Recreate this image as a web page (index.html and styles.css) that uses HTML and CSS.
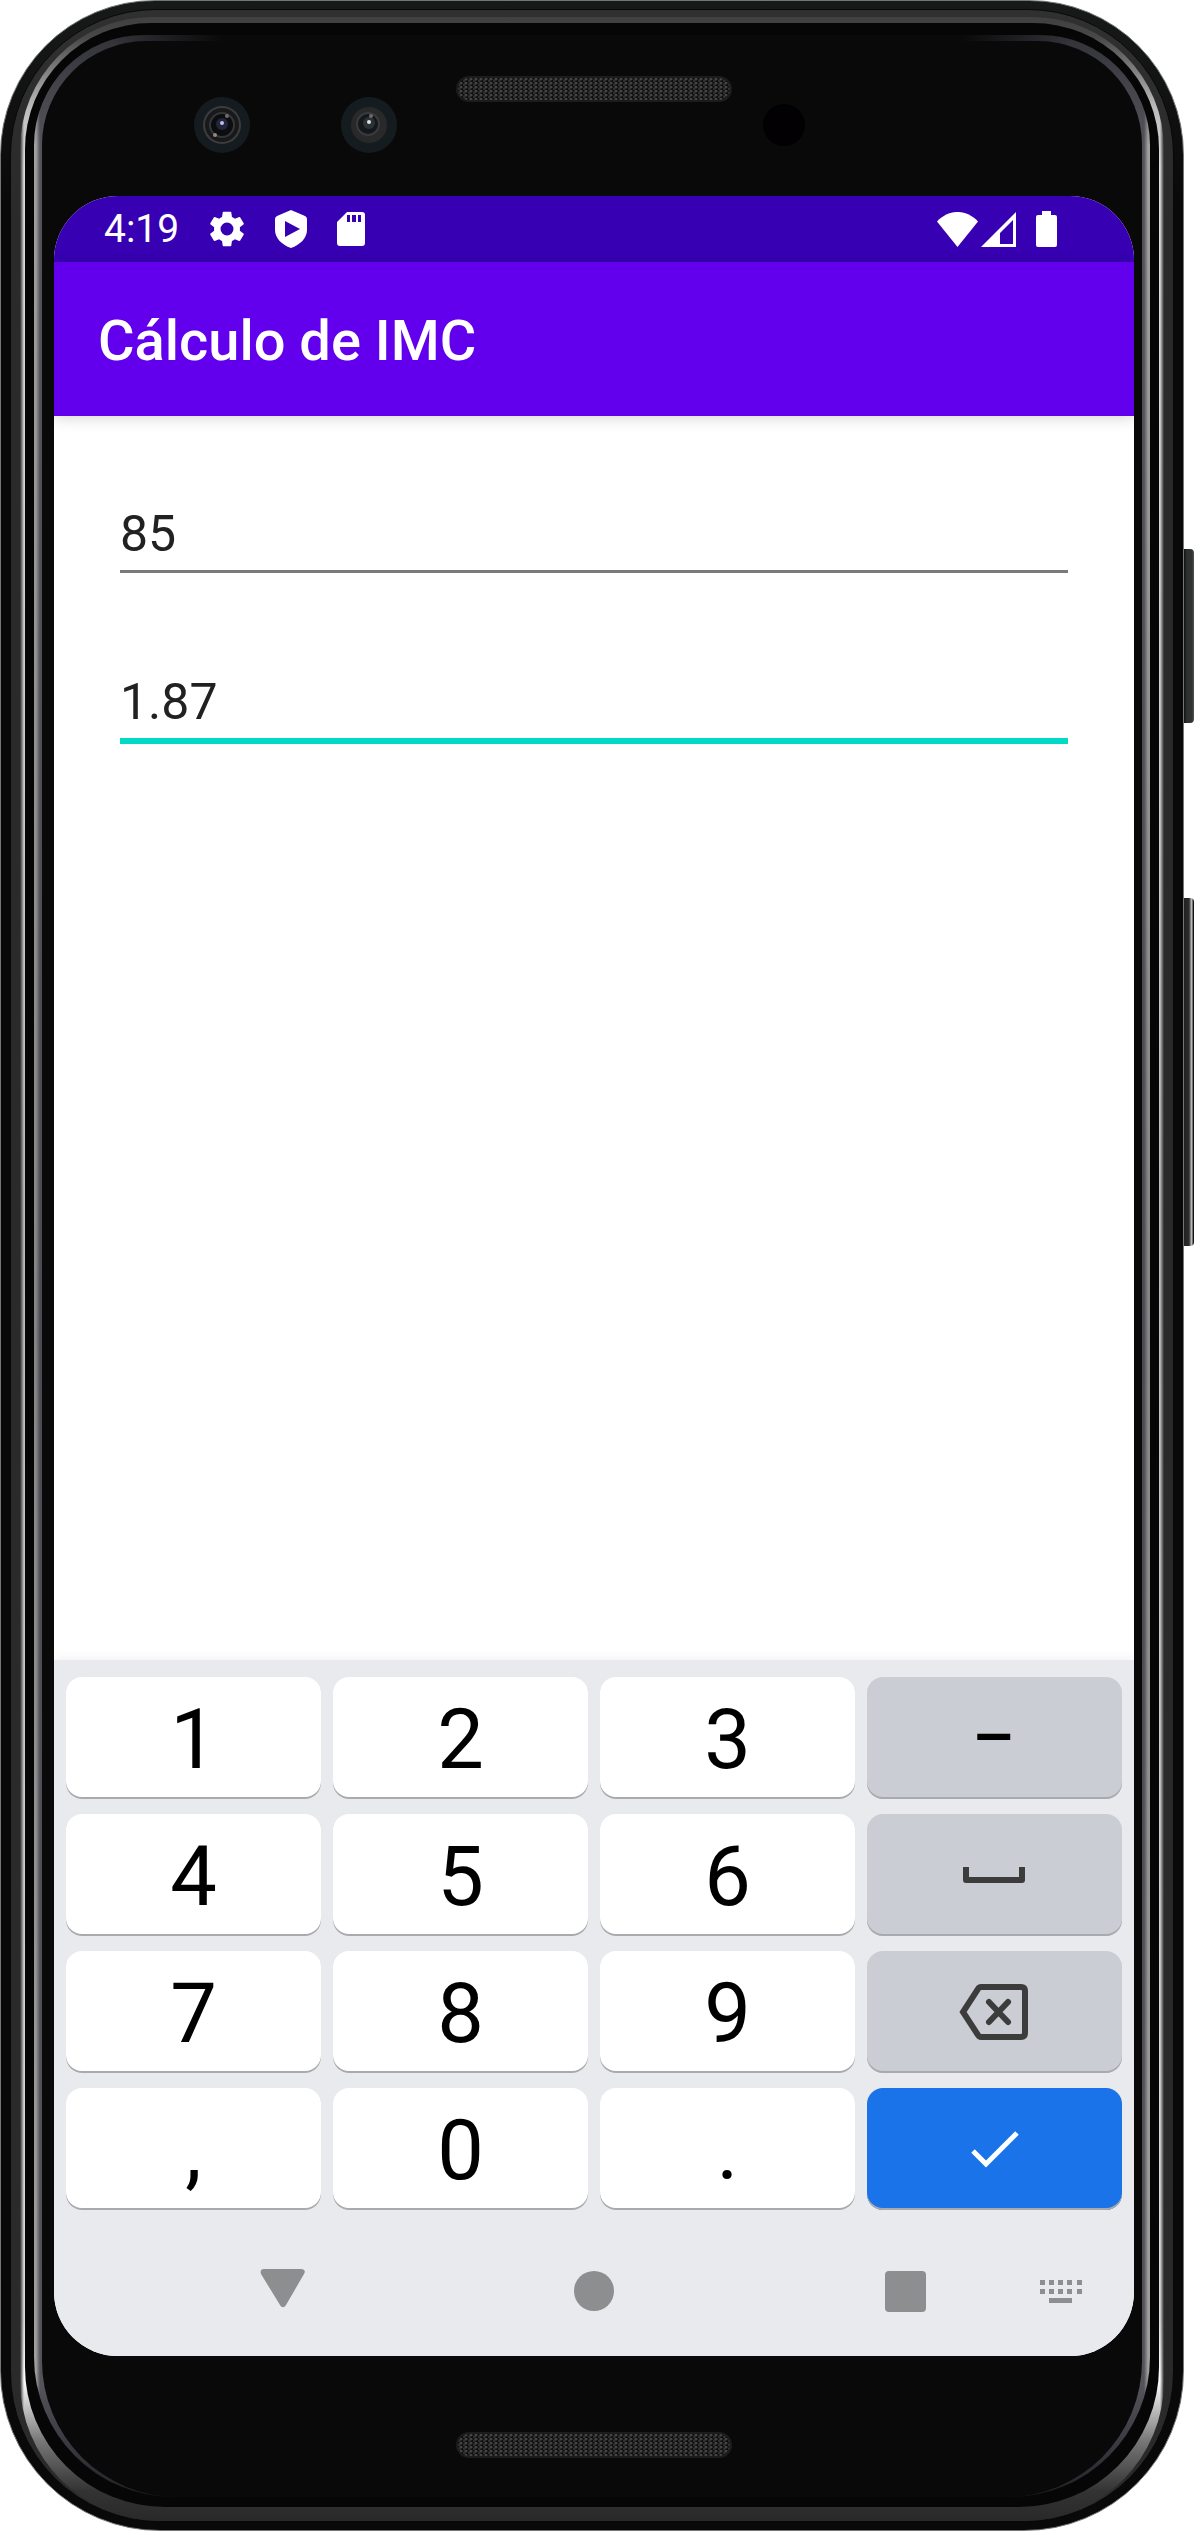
FILE: index.html
```html
<!DOCTYPE html>
<html lang="pt-BR">
<head>
<meta charset="utf-8">
<meta name="viewport" content="width=device-width, initial-scale=1">
<title>Cálculo de IMC</title>
<link rel="stylesheet" href="styles.css">
</head>
<body>
<div class="device">
  <div class="shell"><div class="band"><div class="highlight"><div class="glass"><div class="rim"><div class="face">
    <div class="sensors" aria-hidden="true">
      <div class="cameras">
        <svg class="camera" viewBox="0 0 56 56"><circle cx="28" cy="28" r="28" fill="#151c20"/><circle cx="28" cy="28" r="19" fill="#3c3c3d"/><circle cx="28" cy="28" r="17" fill="#17191a"/><circle cx="28" cy="28" r="12" fill="#0c0d0e" stroke="#34373a" stroke-width="2"/><circle cx="28" cy="27" r="6" fill="#24243a"/><circle cx="28" cy="26" r="2" fill="#b9c4ee"/><circle cx="21" cy="38" r="2" fill="#9a8580"/><circle cx="33" cy="19" r="2" fill="#77696a"/></svg>
        <svg class="camera" viewBox="0 0 56 56"><circle cx="28" cy="28" r="28" fill="#151c20"/><circle cx="28" cy="28" r="18" fill="#29292a"/><circle cx="27" cy="27" r="11" fill="#15181b" stroke="#383b3e" stroke-width="2"/><circle cx="28" cy="26" r="6" fill="#2b3135"/><circle cx="28" cy="25" r="2" fill="#d9e2ea"/><circle cx="30" cy="19" r="2" fill="#70686e"/></svg>
      </div>
      <div class="speaker"></div>
      <div class="proximity"></div>
    </div>
    <div class="screen">
      <div class="status">
        <div class="status-left">
          <span class="time">4:19</span>
          <svg width="36" height="36" viewBox="2 2 20 20" fill="#fff"><path d="M19.14 12.94c.04-.3.06-.61.06-.94 0-.32-.02-.64-.07-.94l2.03-1.58a.49.49 0 0 0 .12-.61l-1.92-3.32a.49.49 0 0 0-.59-.22l-2.39.96c-.5-.38-1.03-.7-1.62-.94L14.4 2.81A.48.48 0 0 0 13.92 2.4h-3.84c-.24 0-.43.17-.47.41l-.36 2.54c-.59.24-1.13.57-1.62.94l-2.39-.96a.48.48 0 0 0-.59.22L2.74 8.87c-.12.21-.08.47.12.61l2.03 1.58c-.05.3-.09.63-.09.94s.02.64.07.94l-2.03 1.58a.49.49 0 0 0-.12.61l1.92 3.32c.12.22.37.29.59.22l2.39-.96c.5.38 1.03.7 1.62.94l.36 2.54c.05.24.24.41.48.41h3.84c.24 0 .44-.17.47-.41l.36-2.54c.59-.24 1.13-.56 1.62-.94l2.39.96c.22.08.47 0 .59-.22l1.92-3.32a.49.49 0 0 0-.12-.61zM12 15.6A3.6 3.6 0 1 1 12 8.400a3.6 3.6 0 0 1 0 7.2z"/></svg>
          <svg width="32" height="38" viewBox="0 0 32 38" fill="#fff"><path fill-rule="evenodd" d="M16 0 30 6q2 1 2 3v11c0 8-7 15-16 18C7 35 0 28 0 20V9q0-2 2-3zM10 11v16l15-8z"/></svg>
          <svg width="28" height="34" viewBox="0 0 28 34" fill="#fff"><path fill-rule="evenodd" d="M10 0h15q3 0 3 3v28q0 3-3 3H3q-3 0-3-3V10zM10 3v7h3V3zm5 0v7h4V3zm6 0v7h3V3z"/></svg>
        </div>
        <div class="status-right">
          <svg width="41" height="35" viewBox="0 0 41 35" fill="#fff"><path d="M0 9.500C12-3.200 29-3.200 41 9.500L20.500 35z"/></svg>
          <svg width="35" height="35" viewBox="0 0 35 35" fill="#fff"><path fill-rule="evenodd" d="M35 0v35H0zM32 8 19 21v11h13z"/></svg>
          <svg class="battery" width="21" height="36" viewBox="0 0 21 36" fill="#fff"><path d="M6 0h9v4h4q2 0 2 2v28q0 2-2 2H2q-2 0-2-2V6q0-2 2-2h4z"/></svg>
        </div>
      </div>
      <header class="appbar"><h1>Cálculo de IMC</h1></header>
      <main class="form">
        <input class="field" type="text" inputmode="decimal" aria-label="Peso" value="85">
        <input class="field field-active" type="text" inputmode="decimal" aria-label="Altura" value="1.87">
      </main>
      <div class="keyboard">
        <button class="key">1</button><button class="key">2</button><button class="key">3</button>
        <button class="key key-alt key-dash">–</button>
        <button class="key">4</button><button class="key">5</button><button class="key">6</button>
        <button class="key key-alt" aria-label="Espaço"><svg width="62" height="16" viewBox="0 0 62 16" fill="none" stroke="#3c3c3d" stroke-width="6" stroke-linejoin="round"><path d="M3 0v13h56V0"/></svg></button>
        <button class="key">7</button><button class="key">8</button><button class="key">9</button>
        <button class="key key-alt" aria-label="Apagar"><svg width="70" height="56" viewBox="0 0 70 56" fill="none" stroke="#3c3c3d" stroke-width="6" stroke-linejoin="round" stroke-linecap="round"><path stroke-linejoin="miter" d="M22 3h40q4 0 4 4v42q0 4-4 4H22q-2 0-3-2L4 28 19 5q1-2 3-2z"/><path d="m30 18 19 20M49 18 30 38"/></svg></button>
        <button class="key">,</button><button class="key">0</button><button class="key">.</button>
        <button class="key key-done" aria-label="Concluir"><svg width="48" height="37" viewBox="0 0 48 37" fill="none" stroke="#fff" stroke-width="5"><path d="m2 20 13 13L46 2"/></svg></button>
      </div>
      <nav class="navbar">
        <div class="nav-main">
          <button aria-label="Voltar"><svg width="46" height="46" viewBox="0 0 46 46" fill="#8d8e90"><path d="M4 1h37c3 0 5 2 3 5L26 37c-2 3-4 3-6 0L1 6C0 3 1 1 4 1z"/></svg></button>
          <button aria-label="Início"><svg width="40" height="40" viewBox="0 0 40 40" fill="#8d8e90"><circle cx="20" cy="20" r="20"/></svg></button>
          <button aria-label="Recentes"><svg width="41" height="41" viewBox="0 0 41 41" fill="#8d8e90"><rect width="41" height="41" rx="4"/></svg></button>
        </div>
        <button class="nav-ime" aria-label="Teclado"><svg width="42" height="24" viewBox="0 0 42 24" fill="#8d8e90"><path d="M0 1h5v5H0zm9 0h5v5H9zm9 0h5v5h-5zm9 0h5v5h-5zm10 0h5v5h-5zM0 10h5v5H0zm9 0h5v5H9zm9 0h5v5h-5zm9 0h5v5h-5zm10 0h5v5h-5zM9 19h23v5H9z"/></svg></button>
      </nav>
    </div>
    <div class="chin" aria-hidden="true"><div class="speaker"></div></div>
  </div></div></div></div></div></div>
  <div class="side" aria-hidden="true">
    <div class="power"></div>
    <div class="volume"></div>
  </div>
</div>
</body>
</html>
```
FILE: styles.css
```css
* { box-sizing: border-box; }

body {
  margin: 0;
  background: #fff;
  font-family: Roboto, "Liberation Sans", sans-serif;
}

button {
  border: 0;
  padding: 0;
  background: none;
  font: inherit;
  display: flex;
  align-items: center;
  justify-content: center;
}

svg { display: block; flex: none; }

/* Phone body: each layer is one ring of the frame */
.device {
  display: flex;
  min-height: 100vh;
  padding-bottom: 1px;
}

.shell, .band, .highlight, .glass, .rim, .face, .screen {
  display: flex;
  flex-direction: column;
  flex: 1;
  min-width: 0;
}

.shell {
  border: 1px solid #737875;
  border-radius: 155px 155px 160px 160px;
  padding: 8px 9px;
  background: linear-gradient(#181a19, #090909 200px);
}

.band {
  border: 1px solid #080808;
  border-radius: 146px 146px 150px 150px;
  padding: 7px 9px 0;
  background: linear-gradient(#303030, #2a2a2a 200px, #2a2a2a);
}

.highlight {
  border-radius: 132px 132px 140px 140px;
  padding: 6px 5px 14px;
  background:
    linear-gradient(to right, #2a2a2a, transparent 4px, transparent calc(100% - 4px), #2a2a2a),
    linear-gradient(#404040, #484848 20px, #bbb 90px, #ddd 150px, #ccc 800px, #bbb 1200px, #ddd calc(100% - 200px), #fff calc(100% - 140px), #777 calc(100% - 80px), #333 calc(100% - 30px), #292929);
}

.glass {
  border-radius: 126px 126px 140px 140px;
  padding: 12px 9px 10px;
  background: #060606;
}

.rim {
  border-radius: 110px 110px 140px 140px;
  padding: 6px 8px 0;
  background:
    linear-gradient(to right, transparent 80px, #090909 190px, #090909 calc(100% - 190px), transparent calc(100% - 80px)),
    linear-gradient(to right, transparent 2px, rgba(50, 50, 58, .7) 6px, rgba(50, 50, 58, .7) calc(100% - 6px), transparent calc(100% - 2px)),
    linear-gradient(#303035, #77767b 60px, #a0a0a2 110px, #909092 800px, #858588 1300px, #a0a0a2 calc(100% - 110px), #090909 calc(100% - 10px));
}

.face {
  border-radius: 104px 104px 136px 136px;
  padding: 0 8px 0 12px;
  background: #090909;
}

.sensors {
  display: grid;
  grid-template-columns: 1fr auto 1fr;
  height: 155px;
  padding-top: 35px;
}

.cameras {
  display: flex;
  justify-content: flex-end;
  gap: 91px;
  padding: 21px 59px 0 0;
}

.camera { width: 56px; height: 56px; }

.speaker {
  width: 276px;
  height: 26px;
  border: 2px solid #1c1c1c;
  border-radius: 13px;
  background:
    radial-gradient(circle at 3px 1px, #444 1px, transparent 2px) 0 0 / 5px 4px,
    radial-gradient(circle at 1px 3px, #303030 1px, transparent 2px) 0 0 / 5px 4px,
    #0c0c0c;
}

.proximity {
  width: 42px;
  height: 42px;
  margin: 28px 0 0 31px;
  border-radius: 50%;
  background: #020003;
}

.chin {
  display: flex;
  justify-content: center;
  height: 141px;
  padding-top: 76px;
}

.side {
  width: 10px;
  padding-top: 549px;
}

.power, .volume {
  border-radius: 0 4px 4px 0;
}

.power {
  height: 174px;
  background: linear-gradient(to right, #111, #303232 3px, #303232 8px, #555);
}

.volume {
  height: 348px;
  margin-top: 175px;
  background: linear-gradient(to right, #222, #2c2c2c 5px, #d5d5d5 8px, #111 9px);
}

/* Screen */
.screen {
  border-radius: 64px;
  overflow: hidden;
  background: #fff;
}

.status {
  display: flex;
  justify-content: space-between;
  align-items: center;
  height: 66px;
  padding: 0 77px 0 50px;
  background: #3700b3;
  color: #fff;
}

.status-left { display: flex; align-items: center; gap: 30px; }
.status-right { display: flex; align-items: center; gap: 3px; }
.battery { margin-left: 17px; }
.time { font-size: 39px; line-height: 66px; }

.appbar {
  display: flex;
  align-items: center;
  height: 154px;
  padding: 4px 44px 0;
  background: #6200ee;
  color: #fff;
  box-shadow: 0 2px 14px rgba(0, 0, 0, .16);
}

h1 {
  margin: 0;
  font-size: 56px;
  font-weight: 500;
  line-height: 64px;
}

.form {
  display: flex;
  flex-direction: column;
  align-items: stretch;
  flex: 1;
  gap: 99px;
  padding: 88px 66px;
}

.field {
  width: 100%;
  border: 0;
  border-bottom: 3px solid #7a7a7a;
  border-radius: 0;
  padding: 0 0 6px;
  outline: 0;
  background: none;
  color: #212121;
  font: 50px/60px Roboto, "Liberation Sans", sans-serif;
  height: 69px;
}

.field-active {
  height: 72px;
  border-bottom: 6px solid #03dac5;
}

.keyboard {
  display: grid;
  grid-template-columns: repeat(4, 1fr);
  grid-auto-rows: 122px;
  gap: 15px 12px;
  padding: 17px 12px 0;
  background: #e8eaed;
  box-shadow: 0 -2px 10px rgba(0, 0, 0, .06);
}

.key {
  border-radius: 16px;
  padding-top: 4px;
  background: #fff;
  box-shadow: inset 0 -2px #a9aaad;
  color: #000;
  font-size: 83px;
  line-height: 118px;
}

.key-alt {
  padding: 0 2px 0 0;
  background: #cbcdd5;
}

.key-dash {
  font-size: 66px;
  font-weight: 500;
}

.key-done {
  padding: 0;
  background: #1a73e8;
}

.navbar {
  display: flex;
  height: 146px;
  padding: 17px 17px 0 129px;
  background: #e8eaed;
}

.nav-main {
  display: flex;
  flex: 1;
  justify-content: space-between;
}

.nav-main button { width: 200px; }
.nav-ime { width: 112px; }
.navbar button { height: 128px; }
```
